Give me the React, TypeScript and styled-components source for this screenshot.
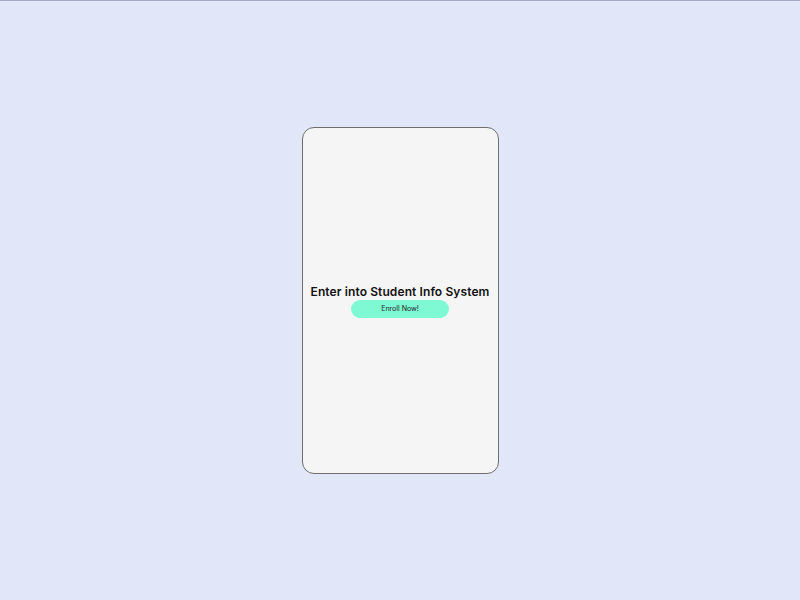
import React from "react";
import styled, { createGlobalStyle } from "styled-components";

const GlobalStyle = createGlobalStyle`
  html, body {
    margin: 0;
    padding: 0;
    height: 100%;
  }
  body {
    background: #e1e6f8;
    border-top: 1px solid #a5abc4;
    box-sizing: border-box;
    font-family: "Inter", "Noto Sans", sans-serif;
  }
  #root {
    height: 100%;
  }
`;

const Page = styled.div`
  display: flex;
  align-items: center;
  justify-content: center;
  height: 599px;
`;

const Card = styled.div`
  width: 197px;
  height: 347px;
  box-sizing: border-box;
  background: #f5f5f5;
  border: 1px solid #6e6e6e;
  border-radius: 12px;
  display: flex;
  flex-direction: column;
  align-items: center;
  justify-content: center;
`;

const Title = styled.h1`
  margin: 0;
  font-size: 12px;
  font-weight: 600;
  color: #111;
  letter-spacing: 0.1px;
  line-height: 16px;
  white-space: nowrap;
`;

const EnrollButton = styled.button`
  margin-top: 0;
  width: 98px;
  height: 18px;
  border: none;
  border-radius: 9px;
  background: #7ef9d3;
  color: #222;
  font-family: "Inter", "Noto Sans", sans-serif;
  font-size: 7px;
  padding: 0;
  cursor: pointer;
`;

export default function App(): JSX.Element {
  return (
    <>
      <GlobalStyle />
      <Page>
        <Card>
          <Title>Enter into Student Info System</Title>
          <EnrollButton>Enroll Now!</EnrollButton>
        </Card>
      </Page>
    </>
  );
}
